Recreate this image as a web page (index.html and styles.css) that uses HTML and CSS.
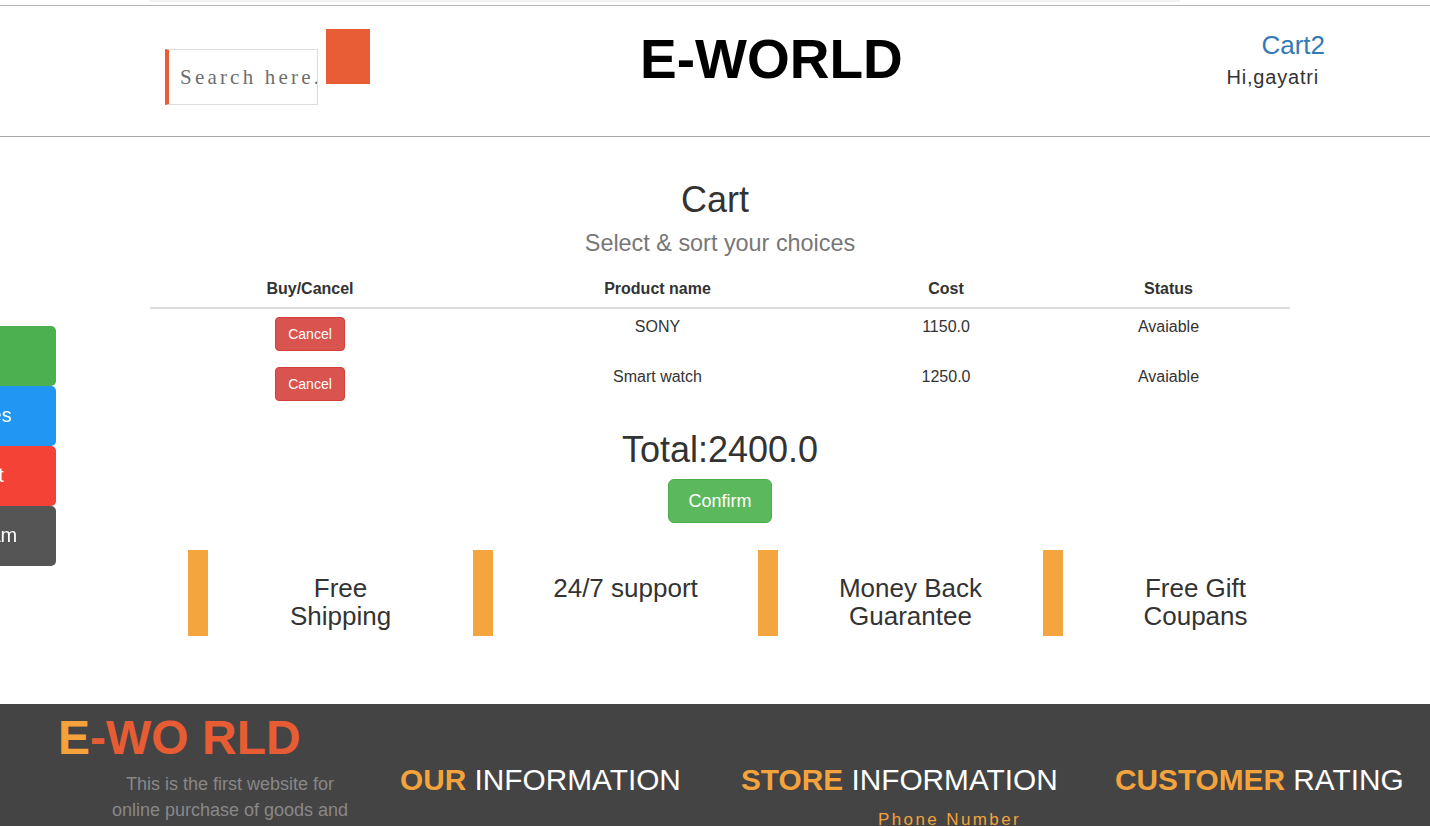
FILE: index.html
```html
<!DOCTYPE html>
<html lang="en">
<head>
<meta charset="utf-8">
<title>E-WORLD Cart</title>
<link rel="stylesheet" href="styles.css">
</head>
<body>
<div class="top-strip"></div>
<header class="site-header">
  <div class="search-group">
    <input class="search-input" type="text" placeholder="Search here...">
    <button class="search-btn" type="button" aria-label="Search"></button>
  </div>
  <h1 class="brand">E-WORLD</h1>
  <div class="user-box">
    <a class="cart-link" href="#">Cart2</a>
    <span class="greeting">Hi,gayatri</span>
  </div>
</header>

<nav class="sidenav">
  <a class="side-link side-green" href="#">About</a>
  <a class="side-link side-blue" href="#">Services</a>
  <a class="side-link side-red" href="#">Contact</a>
  <a class="side-link side-dark" href="#">Telegram</a>
</nav>

<main class="container">
  <h2 class="cart-title">Cart</h2>
  <p class="cart-sub">Select &amp; sort your choices</p>
  <table class="cart-table">
    <colgroup>
      <col class="c1"><col class="c2"><col class="c3"><col class="c4">
    </colgroup>
    <thead>
      <tr><th>Buy/Cancel</th><th>Product name</th><th>Cost</th><th>Status</th></tr>
    </thead>
    <tbody>
      <tr><td><button class="btn-cancel" type="button">Cancel</button></td><td>SONY</td><td>1150.0</td><td>Avaiable</td></tr>
      <tr><td><button class="btn-cancel" type="button">Cancel</button></td><td>Smart watch</td><td>1250.0</td><td>Avaiable</td></tr>
    </tbody>
  </table>
  <div class="total">Total:2400.0</div>
  <div class="confirm-wrap"><button class="btn-confirm" type="button">Confirm</button></div>
</main>

<section class="features">
  <div class="feature"><span class="bar"></span><div class="feature-text">Free Shipping</div></div>
  <div class="feature"><span class="bar"></span><div class="feature-text">24/7 support</div></div>
  <div class="feature"><span class="bar"></span><div class="feature-text">Money Back Guarantee</div></div>
  <div class="feature"><span class="bar"></span><div class="feature-text">Free Gift Coupans</div></div>
</section>

<footer class="site-footer">
  <div class="f-col f-about">
    <div class="f-logo"><span class="o1">E</span><span class="o2">-WO RLD</span></div>
    <p class="f-desc">This is the first website for online purchase of goods and services</p>
  </div>
  <div class="f-col">
    <h3 class="f-head"><b>OUR</b> INFORMATION</h3>
  </div>
  <div class="f-col">
    <h3 class="f-head"><b>STORE</b> INFORMATION</h3>
    <div class="f-phone">Phone Number</div>
  </div>
  <div class="f-col">
    <h3 class="f-head"><b>CUSTOMER</b> RATING</h3>
  </div>
</footer>
</body>
</html>
```
FILE: styles.css
```css
* { box-sizing: border-box; }
html, body { margin: 0; padding: 0; }
body {
  font-family: "Liberation Sans", Arial, sans-serif;
  color: #333;
  background: #fff;
  font-size: 14px;
  line-height: 20px;
  overflow: hidden;
}

.top-strip {
  height: 2px;
  margin: 0 250px 3px 150px;
  background: #f2f2f2;
}

.site-header {
  display: flex;
  align-items: flex-start;
  height: 132px;
  border-top: 1px solid #b4b4b4;
  border-bottom: 1px solid #aaa;
}

.search-group {
  display: flex;
  align-items: flex-start;
  margin-left: 165px;
  margin-top: 23px;
}
.search-input {
  width: 153px;
  height: 56px;
  margin-top: 20px;
  padding: 0 0 0 11px;
  border: 1px solid #ddd;
  border-left: 4px solid #e85d35;
  font-family: "Liberation Serif", "Times New Roman", serif;
  font-size: 21px;
  letter-spacing: 3.2px;
  color: #666;
  outline: none;
  background: #fff;
}
.search-input::placeholder { color: #6e6e6e; opacity: 1; }
.search-btn {
  width: 44px;
  height: 55px;
  margin-left: 8px;
  border: none;
  padding: 0;
  background: #e85d35;
}

.brand {
  margin: 26px 0 0 270px;
  font-size: 55px;
  line-height: 55px;
  font-weight: bold;
  color: #000;
}

.user-box {
  margin-left: auto;
  margin-top: 24px;
  padding-right: 105px;
  display: flex;
  flex-direction: column;
  align-items: flex-end;
}
.cart-link {
  font-size: 26px;
  line-height: 31px;
  color: #337ab7;
  text-decoration: none;
}
.greeting {
  margin-top: 4px;
  padding-right: 6px;
  font-size: 20px;
  line-height: 24px;
  letter-spacing: 0.8px;
  color: #333;
}

.sidenav {
  position: fixed;
  left: -80px;
  top: 326px;
  display: flex;
  flex-direction: column;
}
.side-link {
  display: block;
  width: 136px;
  height: 60px;
  padding: 14px 0 16px 15px;
  font-size: 20px;
  line-height: 30px;
  color: #fff;
  text-decoration: none;
  border-radius: 0 5px 5px 0;
}
.side-green { background: #4caf50; }
.side-blue { background: #2196f3; }
.side-red { background: #f44336; }
.side-dark { background: #555; }

.container {
  width: 1140px;
  margin-left: 150px;
}
.cart-title {
  margin: 43px 0 0;
  padding-right: 10px;
  text-align: center;
  font-size: 36px;
  line-height: 40px;
  font-weight: normal;
  color: #333;
}
.cart-sub {
  margin: 10px 0 0;
  text-align: center;
  font-size: 23.4px;
  line-height: 27px;
  color: #777;
}

.cart-table {
  width: 1140px;
  margin-top: 14px;
  border-collapse: collapse;
  table-layout: fixed;
  font-size: 16px;
}
.c1 { width: 320px; }
.c2 { width: 375px; }
.c3 { width: 202px; }
.c4 { width: 243px; }
.cart-table th {
  padding: 8px;
  font-weight: bold;
  text-align: center;
  vertical-align: bottom;
  border-bottom: 2px solid #ddd;
}
.cart-table td {
  padding: 8px;
  text-align: center;
  vertical-align: top;
}
.btn-cancel {
  display: inline-block;
  padding: 6px 12px;
  font-family: "Liberation Sans", Arial, sans-serif;
  font-size: 14px;
  line-height: 20px;
  color: #fff;
  background: #d9534f;
  border: 1px solid #d43f3a;
  border-radius: 4px;
}

.total {
  margin-top: 21px;
  text-align: center;
  font-size: 36px;
  line-height: 40px;
  color: #333;
}
.confirm-wrap {
  margin-top: 9px;
  text-align: center;
}
.btn-confirm {
  padding: 10px 19px;
  font-family: "Liberation Sans", Arial, sans-serif;
  font-size: 18px;
  line-height: 22px;
  color: #fff;
  background: #5cb85c;
  border: 1px solid #4cae4c;
  border-radius: 6px;
}

.features {
  display: grid;
  grid-template-columns: repeat(4, 285px);
  margin: 27px 0 0 188px;
}
.feature {
  display: flex;
  height: 86px;
}
.bar {
  width: 20px;
  height: 86px;
  background: #f4a53e;
  flex: none;
}
.feature-text {
  flex: 1;
  padding: 24px 56px 0;
  text-align: center;
  font-size: 26px;
  line-height: 28px;
  color: #333;
}

.site-footer {
  display: grid;
  grid-template-columns: 370px 341px 374px 1fr;
  margin-top: 68px;
  padding-top: 7px;
  height: 200px;
  background: #444;
}
.f-about { padding-left: 58px; }
.f-logo {
  font-size: 48px;
  line-height: 53px;
  font-weight: bold;
}
.f-logo .o1 { color: #f4a23c; }
.f-logo .o2 { color: #e85c33; }
.f-desc {
  width: 250px;
  margin: 7px 0 0 47px;
  text-align: center;
  font-size: 18px;
  line-height: 26px;
  color: #888;
}
.f-col:not(.f-about) { padding-left: 30px; }
.f-head {
  margin: 52px 0 0;
  font-size: 29.8px;
  line-height: 33px;
  font-weight: normal;
  color: #fff;
  white-space: nowrap;
}
.f-head b { color: #f5a33c; font-weight: bold; }
.f-phone {
  margin: 12px 0 0 137px;
  font-size: 17px;
  line-height: 24px;
  letter-spacing: 2.4px;
  color: #f4a23c;
}
```
